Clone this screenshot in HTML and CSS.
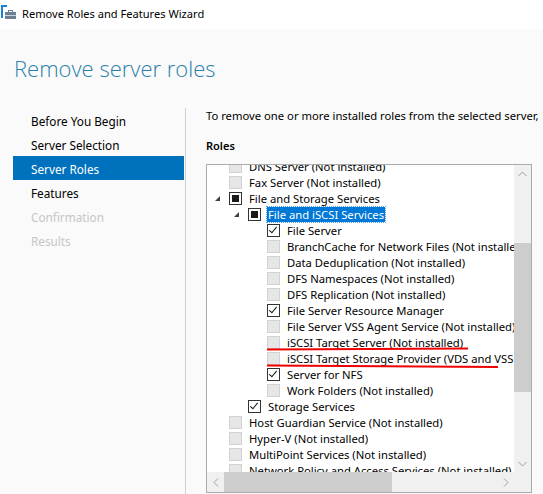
FILE: index.html
```html
<!DOCTYPE html>
<html>
<head>
<meta charset="utf-8">
<link rel="stylesheet" href="styles.css">
</head>
<body>
<div class="titlebar">
  <svg class="app-icon" width="16" height="16" viewBox="0 0 16 16">
    <rect x="0" y="1" width="6" height="2" fill="#1a82d8"/>
    <rect x="0" y="1" width="2" height="13" fill="#1a82d8"/>
    <rect x="7.5" y="6.5" width="4" height="2" fill="none" stroke="#6d7f91" stroke-width="1"/>
    <rect x="4" y="8" width="11" height="7" fill="#6d7f91"/>
    <rect x="4" y="11" width="11" height="1" fill="#c9d2da"/>
  </svg>
  <span class="title">Remove Roles and Features Wizard</span>
</div>
<div class="window">
  <h1 class="page-title">Remove server roles</h1>
  <div class="content">
    <nav class="steps">
      <div class="step">Before You Begin</div>
      <div class="step">Server Selection</div>
      <div class="step active">Server Roles</div>
      <div class="step">Features</div>
      <div class="step disabled">Confirmation</div>
      <div class="step disabled">Results</div>
    </nav>
    <section class="pane">
      <p class="intro">To remove one or more installed roles from the selected server,</p>
      <h2 class="roles-label">Roles</h2>
      <div class="listbox">
        <div class="list-main">
          <div class="viewport">
            <ul class="tree">
              <li class="row l0"><span class="exp"></span><span class="cb off"></span><span class="label">DNS Server (Not installed)</span></li>
              <li class="row l0"><span class="exp"></span><span class="cb off"></span><span class="label">Fax Server (Not installed)</span></li>
              <li class="row l0"><span class="exp open"></span><span class="cb partial"></span><span class="label">File and Storage Services</span></li>
              <li class="row l1"><span class="exp open"></span><span class="cb partial"></span><span class="label selected">File and iSCSI Services</span></li>
              <li class="row l2"><span class="exp"></span><span class="cb on"></span><span class="label">File Server</span></li>
              <li class="row l2"><span class="exp"></span><span class="cb off"></span><span class="label">BranchCache for Network Files (Not installed)</span></li>
              <li class="row l2"><span class="exp"></span><span class="cb off"></span><span class="label">Data Deduplication (Not installed)</span></li>
              <li class="row l2"><span class="exp"></span><span class="cb off"></span><span class="label">DFS Namespaces (Not installed)</span></li>
              <li class="row l2"><span class="exp"></span><span class="cb off"></span><span class="label">DFS Replication (Not installed)</span></li>
              <li class="row l2"><span class="exp"></span><span class="cb on"></span><span class="label">File Server Resource Manager</span></li>
              <li class="row l2"><span class="exp"></span><span class="cb off"></span><span class="label">File Server VSS Agent Service (Not installed)</span></li>
              <li class="row l2"><span class="exp"></span><span class="cb off"></span><span class="label">iSCSI Target Server (Not installed)</span></li>
              <li class="row l2"><span class="exp"></span><span class="cb off"></span><span class="label">iSCSI Target Storage Provider (VDS and VSS hardware providers) (Not installed)</span></li>
              <li class="row l2"><span class="exp"></span><span class="cb on"></span><span class="label">Server for NFS</span></li>
              <li class="row l2"><span class="exp"></span><span class="cb off"></span><span class="label">Work Folders (Not installed)</span></li>
              <li class="row l1"><span class="exp"></span><span class="cb on"></span><span class="label">Storage Services</span></li>
              <li class="row l0"><span class="exp"></span><span class="cb off"></span><span class="label">Host Guardian Service (Not installed)</span></li>
              <li class="row l0"><span class="exp"></span><span class="cb off"></span><span class="label">Hyper-V (Not installed)</span></li>
              <li class="row l0"><span class="exp"></span><span class="cb off"></span><span class="label">MultiPoint Services (Not installed)</span></li>
              <li class="row l0"><span class="exp"></span><span class="cb off"></span><span class="label">Network Policy and Access Services (Not installed)</span></li>
            </ul>
            <svg class="annot" width="307" height="307" viewBox="0 0 307 307">
              <line x1="60" y1="184.5" x2="261" y2="183.5" stroke="#ee0000" stroke-width="2"/>
              <line x1="60" y1="200.5" x2="291" y2="202" stroke="#ee0000" stroke-width="2"/>
            </svg>
          </div>
          <div class="vscroll">
            <div class="sb-btn"><svg width="9" height="6" viewBox="0 0 9 6"><polyline points="0.5,5 4.5,1 8.5,5" fill="none" stroke="#a0a0a0" stroke-width="1"/></svg></div>
            <div class="vtrack"><div class="vthumb"></div></div>
            <div class="sb-btn"><svg width="9" height="6" viewBox="0 0 9 6"><polyline points="0.5,1 4.5,5 8.5,1" fill="none" stroke="#a0a0a0" stroke-width="1"/></svg></div>
          </div>
        </div>
        <div class="hscroll-row">
          <div class="hscroll">
            <div class="sb-btn h"><svg width="6" height="9" viewBox="0 0 6 9"><polyline points="5,0.5 1,4.5 5,8.5" fill="none" stroke="#a0a0a0" stroke-width="1"/></svg></div>
            <div class="htrack"><div class="hthumb"></div></div>
            <div class="sb-btn h"><svg width="6" height="9" viewBox="0 0 6 9"><polyline points="1,0.5 5,4.5 1,8.5" fill="none" stroke="#a0a0a0" stroke-width="1"/></svg></div>
          </div>
          <div class="corner"></div>
        </div>
      </div>
    </section>
  </div>
</div>
</body>
</html>
```
FILE: styles.css
```css
html, body {
  margin: 0;
  padding: 0;
}
body {
  width: 543px;
  height: 494px;
  overflow: hidden;
  background: #fafafa;
  font-family: "Noto Sans", "Open Sans", sans-serif;
  font-size: 11.25px;
  color: #000;
}
.titlebar {
  height: 29px;
  background: #fff;
  display: flex;
  align-items: flex-start;
}
.app-icon {
  margin: 4px 0 0 1px;
  flex: none;
}
.title {
  margin-left: 5px;
  font-size: 11.1px;
  line-height: 16px;
  padding-top: 6px;
  white-space: nowrap;
}
.window {
  background: #fafafa;
}
.page-title {
  margin: 0;
  padding: 24px 0 0 14px;
  height: 79px;
  box-sizing: border-box;
  font-family: "Open Sans", "Noto Sans", sans-serif;
  font-weight: 300;
  font-size: 22px;
  line-height: 30px;
  color: #2a7fab;
  white-space: nowrap;
}
.content {
  display: flex;
  height: 386px;
}
.steps {
  flex: none;
  width: 172px;
  margin-left: 13px;
  border-right: 1px solid #d0d0d0;
}
.step {
  height: 24px;
  box-sizing: border-box;
  line-height: 24px;
  padding: 1px 0 0 18px;
  font-size: 11.75px;
  white-space: nowrap;
  width: 171px;
}
.step.active {
  background: #0071bd;
  color: #fff;
}
.step.disabled {
  color: #c6c6c6;
}
.pane {
  flex: 1;
  padding-left: 20px;
  min-width: 0;
}
.intro {
  margin: 0;
  line-height: 16px;
  white-space: nowrap;
}
.roles-label {
  margin: 14px 0 0 0;
  font-size: 11px;
  font-weight: 600;
  line-height: 16px;
}
.listbox {
  margin-top: 10px;
  width: 324px;
  border: 1px solid #ababab;
  background: #fff;
}
.list-main {
  display: flex;
  height: 307px;
}
.viewport {
  position: relative;
  flex: 1;
  overflow: hidden;
}
.tree {
  list-style: none;
  margin: -7px 0 0 0;
  padding: 0;
}
.row {
  display: flex;
  align-items: center;
  height: 16px;
  white-space: nowrap;
}
.row.l1 { padding-left: 19px; }
.row.l2 { padding-left: 38px; }
.exp {
  flex: none;
  width: 22px;
  height: 16px;
  position: relative;
}
.exp.open::after {
  content: "";
  position: absolute;
  left: 8px;
  top: 6px;
  width: 0;
  height: 0;
  border-style: solid;
  border-width: 0 0 5px 5px;
  border-color: transparent transparent #404040 transparent;
}
.cb {
  flex: none;
  box-sizing: border-box;
  width: 13px;
  height: 13px;
  position: relative;
}
.cb.off {
  background: #e6e6e6;
  border: 1px solid #d2d2d2;
}
.cb.on, .cb.partial {
  background: #fff;
  border: 1px solid #333;
}
.cb.partial::after {
  content: "";
  position: absolute;
  left: 2px;
  top: 2px;
  width: 7px;
  height: 7px;
  background: #1a1a1a;
}
.cb.on::after {
  content: "";
  position: absolute;
  left: 3px;
  top: 0px;
  width: 3px;
  height: 7px;
  border-right: 1.6px solid #111;
  border-bottom: 1.6px solid #111;
  transform: rotate(40deg);
}
.label {
  margin-left: 7px;
  line-height: 15px;
}
.label.selected {
  background: #0078d7;
  color: #fff;
  margin-left: 6px;
  padding: 0 1px;
  outline: 1px dotted #5aa0e0;
}
.annot {
  position: absolute;
  left: 0;
  top: 0;
  pointer-events: none;
}
.vscroll {
  flex: none;
  width: 17px;
  display: flex;
  flex-direction: column;
  background: #f0f0f0;
}
.sb-btn {
  flex: none;
  height: 17px;
  display: flex;
  align-items: center;
  justify-content: center;
}
.sb-btn.h {
  width: 17px;
  height: 20px;
}
.vtrack {
  flex: 1;
  padding-top: 61px;
}
.vthumb {
  height: 149px;
  background: #cdcdcd;
}
.hscroll-row {
  display: flex;
  height: 20px;
}
.hscroll {
  flex: 1;
  display: flex;
  background: #f0f0f0;
}
.htrack {
  flex: 1;
}
.hthumb {
  width: 168px;
  height: 20px;
  background: #cdcdcd;
}
.corner {
  width: 17px;
  background: #f0f0f0;
}
```
